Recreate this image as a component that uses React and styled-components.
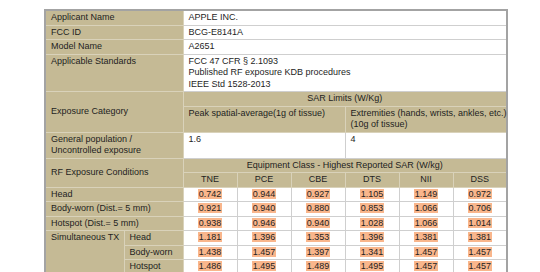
import styled, { createGlobalStyle } from "styled-components"

const GlobalStyle = createGlobalStyle`
    body{
        margin: 0;
        background: #ffffff;
        font-family: "Liberation Sans", Arial, sans-serif;
    }
`

const rows = [
    { name: "Head", values: ["0.742", "0.944", "0.927", "1.105", "1.149", "0.972"] },
    { name: "Body-worn (Dist.= 5 mm)", values: ["0.921", "0.940", "0.880", "0.853", "1.066", "0.706"] },
    { name: "Hotspot (Dist.= 5 mm)", values: ["0.938", "0.946", "0.940", "1.028", "1.066", "1.014"] },
]

const simultaneous = [
    { name: "Head", values: ["1.181", "1.396", "1.353", "1.396", "1.381", "1.381"] },
    { name: "Body-worn", values: ["1.438", "1.457", "1.397", "1.341", "1.457", "1.457"] },
    { name: "Hotspot", values: ["1.486", "1.495", "1.489", "1.495", "1.457", "1.457"] },
]

const classes = ["TNE", "PCE", "CBE", "DTS", "NII", "DSS"]

const Values = ({ values }) =>
    values.map((v, i) => (
        <Cell key={i} $center>
            <Mark>{v}</Mark>
        </Cell>
    ))

const App = () => {
    return (
        <Wrapper>
            <GlobalStyle />
            <Title>1. Attestation of Test Results</Title>
            <Table>
                <colgroup>
                    <col style={{ width: 79 }} />
                    <col style={{ width: 59 }} />
                    {classes.map((c) => (
                        <col key={c} style={{ width: 54 }} />
                    ))}
                </colgroup>
                <tbody>
                    <tr>
                        <Label colSpan={2}>Applicant Name</Label>
                        <Cell colSpan={6}>APPLE INC.</Cell>
                    </tr>
                    <tr>
                        <Label colSpan={2}>FCC ID</Label>
                        <Cell colSpan={6}>BCG-E8141A</Cell>
                    </tr>
                    <tr>
                        <Label colSpan={2}>Model Name</Label>
                        <Cell colSpan={6}>A2651</Cell>
                    </tr>
                    <tr>
                        <Label colSpan={2} $top>Applicable Standards</Label>
                        <Cell colSpan={6}>
                            FCC 47 CFR § 2.1093
                            <br />
                            Published RF exposure KDB procedures
                            <br />
                            IEEE Std 1528-2013
                        </Cell>
                    </tr>
                    <tr>
                        <Label colSpan={2} rowSpan={2}>Exposure Category</Label>
                        <Label colSpan={6} $center>SAR Limits (W/Kg)</Label>
                    </tr>
                    <tr>
                        <Label colSpan={3} $top>Peak spatial-average(1g of tissue)</Label>
                        <Label colSpan={3} $top>
                            Extremities (hands, wrists, ankles, etc.)
                            <br />
                            (10g of tissue)
                        </Label>
                    </tr>
                    <tr>
                        <Label colSpan={2} $top>
                            General population /
                            <br />
                            Uncontrolled exposure
                        </Label>
                        <Cell colSpan={3} $top>1.6</Cell>
                        <Cell colSpan={3} $top>4</Cell>
                    </tr>
                    <tr>
                        <Label colSpan={2} rowSpan={2}>RF Exposure Conditions</Label>
                        <Label colSpan={6} $center>Equipment Class - Highest Reported SAR (W/kg)</Label>
                    </tr>
                    <tr>
                        {classes.map((c) => (
                            <Label key={c} $center>{c}</Label>
                        ))}
                    </tr>
                    {rows.map((r) => (
                        <tr key={r.name}>
                            <Label colSpan={2}>{r.name}</Label>
                            <Values values={r.values} />
                        </tr>
                    ))}
                    {simultaneous.map((r, i) => (
                        <tr key={r.name}>
                            {i === 0 && (
                                <Label rowSpan={3} $top>Simultaneous TX</Label>
                            )}
                            <Label>{r.name}</Label>
                            <Values values={r.values} />
                        </tr>
                    ))}
                </tbody>
            </Table>
        </Wrapper>
    )
}

const Wrapper = styled.div`
    padding-left: 44px;
    width: 462px;
`

const Title = styled.h1`
    margin: -12px 0 7px 0;
    font-size: 12.5px;
    line-height: 14px;
    font-weight: bold;
    color: #3a3a3a;
`

const Table = styled.table`
    width: 462px;
    table-layout: fixed;
    border-collapse: collapse;
    border: 2px solid #a3a3a3;
    font-size: 9px;
    line-height: 11.5px;
    color: #1e1e1e;
`

const Cell = styled.td`
    padding: 1px 5px;
    border: 1px solid #cfcfcf;
    background: #ffffff;
    white-space: nowrap;
    text-align: ${(p) => (p.$center ? "center" : "left")};
    vertical-align: ${(p) => (p.$top ? "top" : "middle")};
`

const Label = styled(Cell)`
    background: #c5ba95;
    border-color: #d9d2ba;
`

const Mark = styled.span`
    background: #f9b68c;
    padding: 0 1px;
`

export default App
